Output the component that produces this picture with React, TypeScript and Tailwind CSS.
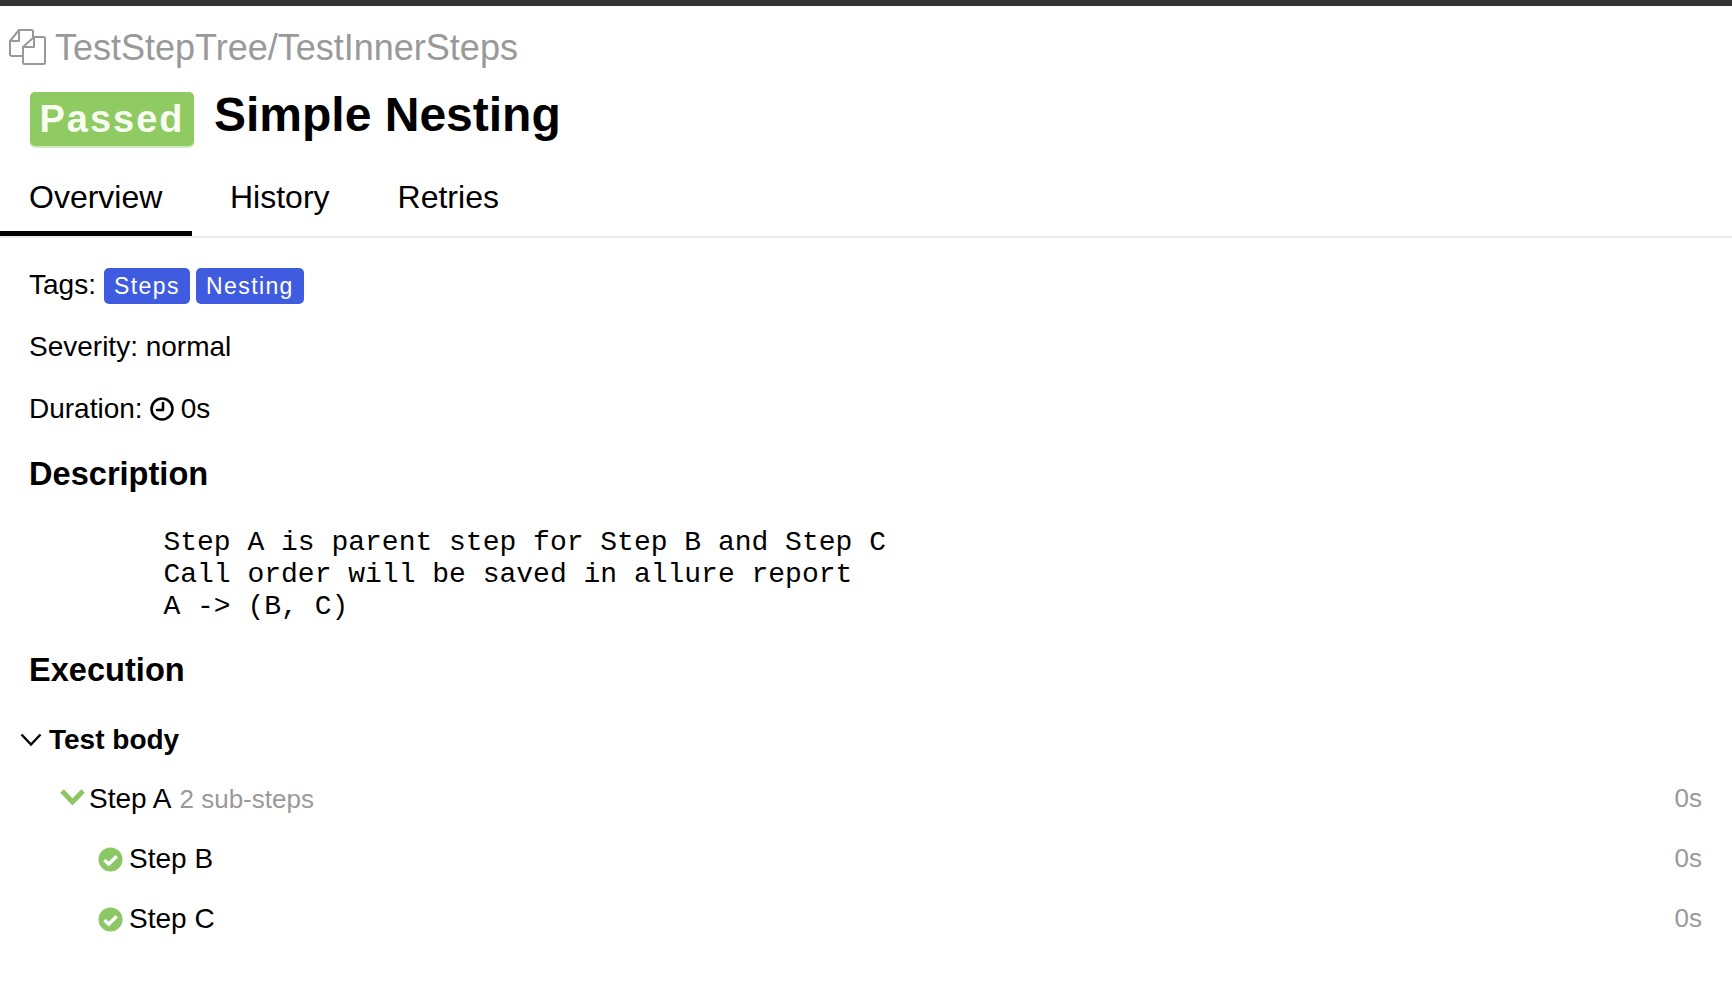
import React from "react";

const sans = "font-['Liberation_Sans',Arial,sans-serif]";

function CopyIcon() {
  return (
    <svg className="-mt-[4px]" width="38" height="38" viewBox="0 0 38 38" fill="none" stroke="#999" strokeWidth="2" strokeLinejoin="round" strokeLinecap="round">
      <path d="M14 28H2.5A1.5 1.5 0 0 1 1 26.5V13L10 2h12.5A1.5 1.5 0 0 1 24 3.5V9" />
      <path d="M10 2v11H1" />
      <path d="M25 9h9.5A1.5 1.5 0 0 1 36 10.5v24a1.5 1.5 0 0 1-1.5 1.5h-19A1.5 1.5 0 0 1 14 34.5V19z" />
      <path d="M25 9v10H14" />
    </svg>
  );
}

function Clock() {
  return (
    <svg width="26" height="26" viewBox="0 0 26 26" fill="none" stroke="#000" strokeWidth="2.6" strokeLinecap="round" strokeLinejoin="round">
      <circle cx="13" cy="13" r="10.5" />
      <path d="M14 7v7H8" />
    </svg>
  );
}

function Check() {
  return (
    <svg width="25" height="25" viewBox="0 0 25 25">
      <circle cx="12.5" cy="12.5" r="12" fill="#8cc765" />
      <path d="M6.5 13l4.2 4.2 8-8" fill="none" stroke="#fff" strokeWidth="3.4" />
    </svg>
  );
}

function StepRow({ children, right, indent }: { children: React.ReactNode; right: string; indent: string }) {
  return (
    <div className={`flex h-[60px] items-center justify-between pr-[30px] ${indent}`}>
      <div className="flex items-center">{children}</div>
      <span className="-mt-[1px] text-[26px] text-[#999]">{right}</span>
    </div>
  );
}

export default function App() {
  return (
    <div className={`${sans} min-h-[990px] bg-white text-black`}>
      <div className="h-[6px] bg-[#333]" />
      <div className="flex h-[86px] items-center gap-[8px] pl-[9px] text-[36px] text-[#999]">
        <CopyIcon />
        <span className="-mt-[2px]">TestStepTree/TestInnerSteps</span>
      </div>
      <div className="flex h-[54px] items-center gap-[20px] pl-[30px]">
        <span className="flex h-[54px] w-[164px] items-center justify-center rounded-[5px] bg-[#8fca63] text-[38px] font-bold tracking-[2px] text-[#f7fdf0] shadow-[0_2px_1px_rgba(143,202,99,0.4)]">
          Passed
        </span>
        <h1 className="-mt-[8px] text-[48px] font-bold leading-none">Simple Nesting</h1>
      </div>
      <div className="mt-[11px] flex gap-[9px] border-b-2 border-[#ececec] text-[32px]">
        <div className="h-[79px] w-[192px] border-b-[5px] border-black px-[29px] pt-[16px]">Overview</div>
        <div className="h-[79px] px-[29px] pt-[16px]">History</div>
        <div className="ml-[1px] h-[79px] px-[29px] pt-[16px]">Retries</div>
      </div>
      <div className="pl-[29px] text-[28px]">
        <div className="mt-[30px] flex h-[36px] items-center">
          <span className="-mt-[3px]">Tags:</span>
          <span className="ml-[8px] flex h-[36px] w-[86px] items-center justify-center rounded-[5px] bg-[#3f5ce0] text-[23px] tracking-[1.4px] text-white">Steps</span>
          <span className="ml-[6px] flex h-[36px] w-[108px] items-center justify-center rounded-[5px] bg-[#3f5ce0] text-[23px] tracking-[1.4px] text-white">Nesting</span>
        </div>
        <div className="mt-[25px] h-[36px] leading-[36px]">Severity: normal</div>
        <div className="mt-[26px] flex h-[36px] items-center gap-[6px]">
          <span>Duration:</span>
          <Clock />
          <span>0s</span>
        </div>
        <h2 className="mt-[28px] h-[38px] text-[32.6px] font-bold leading-[38px]">Description</h2>
        <pre className="mt-[34px] font-['Liberation_Mono','Courier_New',monospace] text-[28px] leading-[32px]">{`        Step A is parent step for Step B and Step C
        Call order will be saved in allure report
        A -> (B, C)`}</pre>
        <h2 className="mt-[28px] h-[38px] text-[32.6px] font-bold leading-[38px]">Execution</h2>
      </div>
      <div className="text-[28px]">
        <div className="mt-[21px] flex h-[59px] items-center pl-[20px] font-bold">
          <svg width="22" height="14" viewBox="0 0 22 14" fill="none" stroke="#000" strokeWidth="2.4">
            <path d="M1.5 1.5L11 11.5 20.5 1.5" />
          </svg>
          <span className="ml-[7px]">Test body</span>
        </div>
        <StepRow right="0s" indent="pl-[60px]">
          <svg className="-mt-[3px]" width="25" height="17" viewBox="0 0 25 17" fill="none" stroke="#8cc765" strokeWidth="5">
            <path d="M2 2l10.5 11L23 2" />
          </svg>
          <span className="ml-[4px]">Step A</span>
          <span className="ml-[8px] text-[26px] text-[#999]">2 sub-steps</span>
        </StepRow>
        <StepRow right="0s" indent="pl-[98px]">
          <Check />
          <span className="ml-[6px]">Step B</span>
        </StepRow>
        <StepRow right="0s" indent="pl-[98px]">
          <Check />
          <span className="ml-[6px]">Step C</span>
        </StepRow>
      </div>
    </div>
  );
}
